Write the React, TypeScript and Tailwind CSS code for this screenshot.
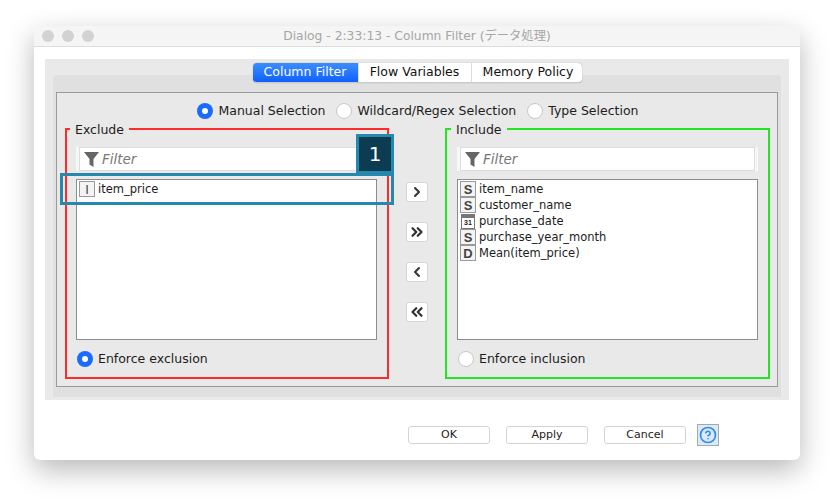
import { ChevronLeft, ChevronRight, ChevronsLeft, ChevronsRight, HelpCircle } from 'lucide-react'

const TITLE = 'Dialog - 2:33:13 - Column Filter (データ処理)'

const TABS = [
  { label: 'Column Filter', width: 'w-[105px]' },
  { label: 'Flow Variables', width: 'w-[113px]' },
  { label: 'Memory Policy', width: 'w-[111px] pl-[3px]' },
]

const INCLUDED = [
  { type: 'S', name: 'item_name' },
  { type: 'S', name: 'customer_name' },
  { type: 'date', name: 'purchase_date' },
  { type: 'S', name: 'purchase_year_month' },
  { type: 'D', name: 'Mean(item_price)' },
]

function Radio({ label, checked }: { label: string; checked?: boolean }) {
  return (
    <div className="flex items-center gap-[5px]">
      {checked ? (
        <span className="flex h-4 w-4 items-center justify-center rounded-full bg-[#1c6bff]">
          <span className="h-[6px] w-[6px] rounded-full bg-white" />
        </span>
      ) : (
        <span className="h-4 w-4 rounded-full border border-[#c8c8c8] bg-white" />
      )}
      <span className="leading-4">{label}</span>
    </div>
  )
}

function TypeIcon({ type }: { type: string }) {
  if (type === 'date') {
    return (
      <span className="ml-px flex h-[15px] w-[14px] flex-col border border-[#777] bg-white">
        <span className="h-[3px] bg-[#777]" />
        <span className="text-center font-['Liberation_Sans'] text-[7px] font-bold leading-[10px] text-[#222]">31</span>
      </span>
    )
  }
  return (
    <span
      className={`flex h-[16px] w-[16px] items-center justify-center border border-[#999] bg-[#f4f4f4] font-['Liberation_Sans'] text-[13px] leading-none text-[#444] ${
        type === 'I' ? 'font-normal' : 'font-bold'
      }`}
    >
      {type}
    </span>
  )
}

function Row({ type, name }: { type: string; name: string }) {
  return (
    <div className="flex h-4 items-center gap-[3px] text-[11.5px]">
      <span className="flex w-[16px] justify-start">
        <TypeIcon type={type} />
      </span>
      <span className="leading-4">{name}</span>
    </div>
  )
}

function FilterBox() {
  return (
    <div className="h-6 w-[301px] bg-[#f7f7f7] px-[3px]">
      <div className="flex h-6 items-center gap-[3px] border border-[#dcdcdc] bg-white pl-[4px] text-[13.5px] italic text-[#777]">
        <svg width="15" height="17" viewBox="0 0 15 17">
          <path d="M0 1h15L9.5 8v8L5.5 13.5V8z" fill="#666" />
        </svg>
        <span>Filter</span>
      </div>
    </div>
  )
}

function ColumnGroup({
  legend,
  boxClass,
  children,
  footer,
}: {
  legend: string
  boxClass: string
  children: React.ReactNode
  footer: React.ReactNode
}) {
  return (
    <fieldset className={`h-[258px] border-2 ${boxClass}`}>
      <legend className="-ml-[6px] h-4 px-[5px] leading-[18px]">{legend}</legend>
      <div className="mt-[10px]">
        <FilterBox />
      </div>
      <div className="mt-[8px] h-[161px] w-[301px] border border-[#8c8c8c] bg-white pl-[2px] pt-px">{children}</div>
      <div className="mt-[11px] pl-px">{footer}</div>
    </fieldset>
  )
}

function MoveButton({ children }: { children: React.ReactNode }) {
  return (
    <button className="flex h-5 w-[22px] items-center justify-center rounded-[3px] border border-[#d6d6d6] bg-white text-[#333]">
      {children}
    </button>
  )
}

function FooterButton({ label }: { label: string }) {
  return (
    <button className="h-[18px] w-[82px] rounded-[3px] border border-[#d4d4d4] bg-white text-[11px] leading-4 text-[#222]">
      {label}
    </button>
  )
}

export default function App() {
  return (
    <div className="h-[502px] w-[834px] bg-white pl-[34px] pt-[26px] font-['DejaVu_Sans','Noto_Sans_CJK_JP',sans-serif] text-[12.5px] text-[#1c1c1c]">
      <div className="relative h-[434px] w-[766px] overflow-hidden rounded-[6px] bg-white shadow-[0_10px_28px_rgba(0,0,0,0.28)]">
        {/* Title bar */}
        <div className="flex h-[21px] items-center border-b border-[#dcdcdc] bg-[#f5f5f5] pl-[8px]">
          <div className="flex gap-2">
            <span className="h-3 w-3 rounded-full bg-[#d2d2d2]" />
            <span className="h-3 w-3 rounded-full bg-[#d2d2d2]" />
            <span className="h-3 w-3 rounded-full bg-[#d2d2d2]" />
          </div>
          <div className="flex-1 pr-[60px] text-center text-[12.3px] text-[#a6a6a6]">{TITLE}</div>
        </div>

        {/* Gray panel */}
        <div className="mx-[11px] mt-3 h-[341px] bg-[#e9e9e9] px-2 pt-1">
          <div className="relative z-10 flex justify-center">
            <div className="flex h-5 overflow-hidden rounded-[4px] border-b border-[#c8c8c8] bg-white shadow-[0_0_1px_rgba(0,0,0,0.4)]">
              {TABS.map((tab, i) => (
                <div
                  key={tab.label}
                  className={
                    i === 0
                      ? `flex ${tab.width} items-center justify-center whitespace-nowrap bg-gradient-to-b from-[#3c8dff] to-[#0f60fb] text-white`
                      : `flex ${tab.width} items-center justify-center whitespace-nowrap border-l border-[#dcdcdc] text-[#111]`
                  }
                >
                  {tab.label}
                </div>
              ))}
            </div>
          </div>
          <div className="-mt-2 h-[322px] rounded-t-[4px] bg-[#e0e0e0] px-[3px] pt-[17px]">
            <div className="h-[295px] border border-[#9a9a9a] bg-[#e9e9e9] pl-2">
              <div className="flex h-[35px] items-center justify-center gap-[11px] pr-[6px]">
                <Radio label="Manual Selection" checked />
                <Radio label="Wildcard/Regex Selection" />
                <Radio label="Type Selection" />
              </div>
              <div className="-mt-[7px] flex">
                <div className="w-[324px]">
                  <ColumnGroup
                    legend="Exclude"
                    boxClass="border-[#ff2a2a] pl-[9px]"
                    footer={<Radio label="Enforce exclusion" checked />}
                  >
                    <Row type="I" name="item_price" />
                  </ColumnGroup>
                </div>
                <div className="flex w-[56px] flex-col items-center gap-5 pt-[61px]">
                  <MoveButton>
                    <ChevronRight size={16} strokeWidth={3} />
                  </MoveButton>
                  <MoveButton>
                    <ChevronsRight size={18} strokeWidth={3} />
                  </MoveButton>
                  <MoveButton>
                    <ChevronLeft size={16} strokeWidth={3} />
                  </MoveButton>
                  <MoveButton>
                    <ChevronsLeft size={18} strokeWidth={3} />
                  </MoveButton>
                </div>
                <div className="w-[325px]">
                  <ColumnGroup
                    legend="Include"
                    boxClass="border-[#22e622] pl-[10px]"
                    footer={<Radio label="Enforce inclusion" />}
                  >
                    {INCLUDED.map((row) => (
                      <Row key={row.name} type={row.type} name={row.name} />
                    ))}
                  </ColumnGroup>
                </div>
              </div>
            </div>
          </div>
        </div>

        {/* Buttons */}
        <div className="mt-[24px] flex items-center pl-[374px]">
          <div className="flex gap-4">
            <FooterButton label="OK" />
            <FooterButton label="Apply" />
            <FooterButton label="Cancel" />
          </div>
          <button className="ml-[11px] flex h-[22px] w-[22px] items-center justify-center border border-[#a8a8a8] bg-[#dbe9f8] text-[#2d8cf0]">
            <HelpCircle size={18} strokeWidth={2.2} />
          </button>
        </div>

        {/* Annotation */}
        <div className="absolute left-[26px] top-[147px] h-[32px] w-[334px] border-[3px] border-[#2589ae]" />
        <div className="absolute left-[322px] top-[108px] flex h-[40px] w-[38px] items-center justify-center border-[3px] border-[#2589ae] bg-[#0b3c52] text-[20px] text-white">
          1
        </div>
      </div>
    </div>
  )
}
